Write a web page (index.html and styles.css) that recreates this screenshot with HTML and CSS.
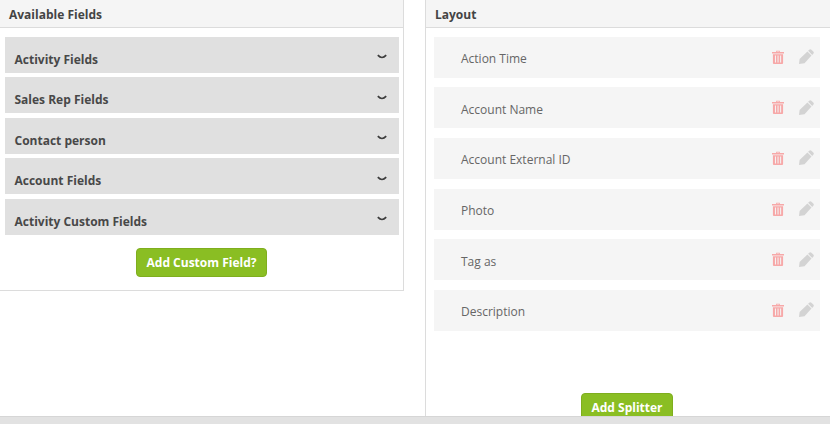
FILE: index.html
```html
<!DOCTYPE html>
<html lang="en">
<head>
<meta charset="utf-8">
<title>Layout editor</title>
<link rel="stylesheet" href="styles.css">
</head>
<body>
<svg class="sprites" width="0" height="0" aria-hidden="true">
  <symbol id="trash" viewBox="0 0 13 15">
    <path d="M4.500 2V.6h4V2H13v1.600H0V2zM5.600 2h1.800V1.500H5.600zM1 4.500h11V14a1 1 0 0 1-1 1H2a1 1 0 0 1-1-1zM3.200 6v7.400h1.100V6zM6 6v7.400h1.100V6zM8.800 6v7.400h1.100V6z" fill-rule="evenodd"/>
  </symbol>
  <symbol id="pencil" viewBox="0 0 15 15">
    <path d="M10.200.7a1.600 1.600 0 0 1 2.200 0l1.900 1.900a1.600 1.600 0 0 1 0 2.200l-1.100 1.100-4.100-4.100zM8.400 2.500l4.100 4.100-7 7.700L0 15l.6-5z"/>
  </symbol>
  <symbol id="chev" viewBox="0 0 10 5">
    <path d="M.8 1.200C2.500 3 3.600 3.500 5 3.500s2.500-.5 4.200-2.300" fill="none" stroke="currentColor" stroke-width="1.700"/>
  </symbol>
</svg>
<div class="page">
  <main class="columns">
    <section class="panel panel-left">
      <h2 class="panel-title">Available Fields</h2>
      <div class="accordion">
        <div class="acc-item"><span>Activity Fields</span><svg class="chev"><use href="#chev"/></svg></div>
        <div class="acc-item"><span>Sales Rep Fields</span><svg class="chev"><use href="#chev"/></svg></div>
        <div class="acc-item"><span>Contact person</span><svg class="chev"><use href="#chev"/></svg></div>
        <div class="acc-item"><span>Account Fields</span><svg class="chev"><use href="#chev"/></svg></div>
        <div class="acc-item"><span>Activity Custom Fields</span><svg class="chev"><use href="#chev"/></svg></div>
      </div>
      <div class="actions actions-left"><button class="btn btn-custom" type="button">Add Custom Field?</button></div>
    </section>
    <section class="panel panel-right">
      <h2 class="panel-title panel-title-right">Layout</h2>
      <div class="rows">
        <div class="row"><span class="row-label">Action Time</span><svg class="ic ic-trash"><use href="#trash"/></svg><svg class="ic ic-pencil"><use href="#pencil"/></svg></div>
        <div class="row"><span class="row-label">Account Name</span><svg class="ic ic-trash"><use href="#trash"/></svg><svg class="ic ic-pencil"><use href="#pencil"/></svg></div>
        <div class="row"><span class="row-label">Account External ID</span><svg class="ic ic-trash"><use href="#trash"/></svg><svg class="ic ic-pencil"><use href="#pencil"/></svg></div>
        <div class="row"><span class="row-label">Photo</span><svg class="ic ic-trash"><use href="#trash"/></svg><svg class="ic ic-pencil"><use href="#pencil"/></svg></div>
        <div class="row"><span class="row-label">Tag as</span><svg class="ic ic-trash"><use href="#trash"/></svg><svg class="ic ic-pencil"><use href="#pencil"/></svg></div>
        <div class="row"><span class="row-label">Description</span><svg class="ic ic-trash"><use href="#trash"/></svg><svg class="ic ic-pencil"><use href="#pencil"/></svg></div>
      </div>
      <div class="actions actions-right"><button class="btn btn-splitter" type="button">Add Splitter</button></div>
    </section>
  </main>
  <div class="footer-bar"></div>
</div>
</body>
</html>
```
FILE: styles.css
```css
* { box-sizing: border-box; }
html, body { margin: 0; height: 100%; }
body {
  background: #fff;
  font-family: "Open Sans", "Liberation Sans", sans-serif;
  color: #444;
  overflow: hidden;
}
.sprites { position: absolute; }
.page {
  height: 424px;
  display: flex;
  flex-direction: column;
}
.columns {
  flex: 1;
  min-height: 0;
  display: flex;
  align-items: flex-start;
  overflow: hidden;
}
.panel-left {
  width: 404px;
  height: 291px;
  border-right: 1px solid #dcdcdc;
  border-bottom: 1px solid #dcdcdc;
}
.panel-right {
  width: 405px;
  height: 416px;
  margin-left: 21px;
  border-left: 1px solid #dcdcdc;
  overflow: hidden;
  flex: none;
}
.panel-title {
  margin: 0;
  height: 28px;
  padding: 0 9px;
  background: #f5f5f5;
  border-bottom: 1px solid #dcdcdc;
  font-size: 12px;
  line-height: 29px;
  font-weight: 700;
  color: #444;
}
.accordion {
  padding: 9.100px 4px 0 5px;
  display: flex;
  flex-direction: column;
  gap: 4.500px;
}
.acc-item {
  height: 35.900px;
  background: #e0e0e0;
  padding: 13.900px 12px 0 9.500px;
  display: flex;
  justify-content: space-between;
  font-size: 12px;
  line-height: 17px;
  font-weight: 700;
  color: #484848;
}
.chev { width: 10px; height: 5px; margin-top: 3.500px; color: #3c3c3c; }
.actions { display: flex; justify-content: center; }
.actions-left { padding-top: 13.400px; }
.actions-right { padding: 62px 2px 0 0; }
.btn {
  border: 1px solid #7fae1e;
  border-radius: 4px;
  background: #8abe23;
  color: #fff;
  font-family: inherit;
  font-size: 12px;
  font-weight: 700;
  line-height: 17px;
  padding: 5px 9px;
  height: 29px;
}
.btn-custom { width: 131px; }
.btn-splitter { width: 92px; }
.rows {
  padding: 8.900px 10px 0 8px;
  display: flex;
  flex-direction: column;
  gap: 9.550px;
}
.row {
  height: 41px;
  background: #f5f5f5;
  padding-left: 27px;
  padding-right: 6px;
  display: flex;
  align-items: center;
  font-size: 12px;
  color: #666;
}
.row-label { flex: 1; margin-top: 3px; }
.ic { display: block; margin-top: -1px; }
.ic-trash { width: 12px; height: 14px; fill: #f7a8a8; }
.ic-pencil { width: 15px; height: 15px; margin-left: 15px; fill: #d3d3d3; }
.footer-bar {
  flex: none;
  height: 8px;
  background: #e2e2e2;
  border-top: 1px solid #d6d6d6;
}
```
